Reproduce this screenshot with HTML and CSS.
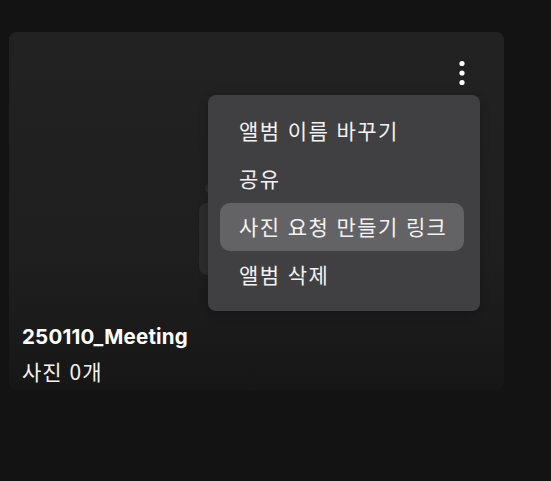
FILE: index.html
```html
<!DOCTYPE html>
<html lang="ko">
<head>
    <meta charset="UTF-8">
    <meta name="viewport" content="width=device-width, initial-scale=1.0">
    <title>앨범</title>
    <link rel="stylesheet" href="styles.css">
</head>
<body>
    <div class="album-grid">
        <div class="album-card">
            <div class="album-thumb">
                <div class="upload-dot"></div>
                <div class="upload-button"></div>

                <button class="more-button" aria-label="더보기">
                    <svg width="6" height="26" viewBox="0 0 6 26">
                        <circle cx="3" cy="3.5" r="2.6" fill="#fff"/>
                        <circle cx="3" cy="13" r="2.6" fill="#fff"/>
                        <circle cx="3" cy="22.5" r="2.6" fill="#fff"/>
                    </svg>
                </button>

                <ul class="album-menu">
                    <li class="menu-item">앨범 이름 바꾸기</li>
                    <li class="menu-item">공유</li>
                    <li class="menu-item active">사진 요청 만들기 링크</li>
                    <li class="menu-item">앨범 삭제</li>
                </ul>
            </div>
            <div class="album-info">
                <div class="album-title">250110_Meeting</div>
                <div class="album-count">사진 0개</div>
            </div>
        </div>
    </div>
</body>
</html>
```

FILE: styles.css
```css
body {
    margin: 0;
    background-color: #131313;
    color: #f3f3f3;
    font-family: Inter, "Noto Sans CJK KR", sans-serif;
}
.album-grid {
    padding: 32px 0 0 9px;
}
.album-card {
    width: 495px;
    border-radius: 8px;
    background: linear-gradient(180deg, #222222 0%, #1f1f1f 60%, #1a1a1a 85%, #161616 100%);
    padding-bottom: 2px;
}
.album-thumb {
    position: relative;
    height: 288px;
}
.upload-button {
    position: absolute;
    left: 190px;
    top: 171px;
    width: 80px;
    height: 72px;
    border-radius: 8px;
    background-color: #2c2c2c;
}
.upload-dot {
    position: absolute;
    left: 196px;
    top: 152px;
    width: 9px;
    height: 9px;
    border-radius: 50%;
    background-color: #2e2e2e;
}
.more-button {
    position: absolute;
    left: 450px;
    top: 28px;
    width: 6px;
    height: 26px;
    padding: 0;
    border: none;
    background: none;
    cursor: pointer;
}
.more-button svg {
    display: block;
}
.album-menu {
    position: absolute;
    left: 199px;
    top: 63px;
    width: 244px;
    margin: 0;
    padding: 12px 16px 12px 12px;
    list-style: none;
    background-color: #404042;
    border-radius: 8px;
    box-shadow: 0 2px 10px rgba(0, 0, 0, 0.25);
    font-family: "Noto Sans CJK KR", sans-serif;
}
.menu-item {
    height: 48px;
    line-height: 47px;
    padding: 0 19px;
    font-size: 21px;
    letter-spacing: 1.4px;
    white-space: nowrap;
    color: #f2f2f2;
    border-radius: 10px;
    cursor: pointer;
}
.menu-item.active {
    background-color: #636365;
}
.album-info {
    padding: 3px 13px 0;
}
.album-title {
    font-size: 20.5px;
    font-weight: 700;
    letter-spacing: 0.2px;
    line-height: 28px;
    color: #ffffff;
}
.album-count {
    font-size: 21px;
    letter-spacing: 1px;
    line-height: 34px;
    margin-top: 3px;
    color: #f3f3f3;
    font-family: "Noto Sans CJK KR", sans-serif;
}
```
